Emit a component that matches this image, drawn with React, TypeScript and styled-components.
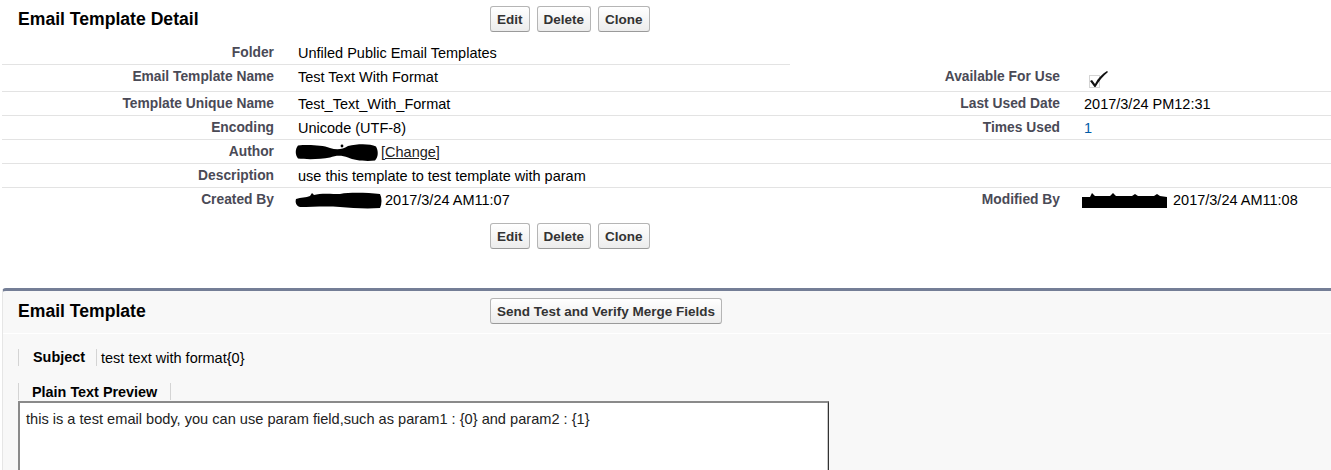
import React from "react";
import styled, { createGlobalStyle } from "styled-components";

const GlobalStyle = createGlobalStyle`
    html, body {
        margin: 0;
        padding: 0;
        background: #ffffff;
        font-family: "Liberation Sans", Arial, sans-serif;
        color: #000;
    }
    #root {
        width: 1331px;
        height: 470px;
        overflow: hidden;
    }
`;

const Page = styled.div`
    width: 1331px;
    height: 470px;
    overflow: hidden;
`;

const HeaderBar = styled.div<{ $pad: number; $height: number; $top?: number }>`
    display: grid;
    grid-template-columns: 472px 1fr;
    align-items: start;
    box-sizing: border-box;
    padding: ${({ $top = 0 }) => $top}px 0 0 ${({ $pad }) => $pad}px;
    height: ${({ $height }) => $height}px;
`;

const Title = styled.h2`
    margin: 0;
    font-size: 17.6px;
    line-height: 26px;
    font-weight: bold;
    color: #000;
`;

const ButtonRow = styled.div`
    display: flex;
    gap: 7px;
`;

const Btn = styled.button`
    height: 26px;
    padding: 0 6px;
    border: 1px solid #b5b5b5;
    border-bottom-color: #9a9a9a;
    border-radius: 3px;
    background: linear-gradient(#ffffff, #ececec);
    font-family: "Liberation Sans", Arial, sans-serif;
    font-size: 13.5px;
    font-weight: bold;
    color: #333;
    cursor: pointer;
`;

const DetailGrid = styled.div`
    display: grid;
    grid-template-columns: 284px 504px 282px 1fr;
    margin-left: 2px;
`;

const Label = styled.div<{ $line?: boolean }>`
    padding: 4px 12px 4px 0;
    text-align: right;
    font-size: 13.8px;
    line-height: 15px;
    font-weight: bold;
    color: #4a4a56;
    border-bottom: 1px solid ${({ $line = true }) => ($line ? "#e3e3e3" : "transparent")};
`;

const Value = styled.div<{ $line?: boolean }>`
    padding: 5px 0 3px 12px;
    font-size: 14.5px;
    line-height: 15px;
    color: #000;
    display: flex;
    align-items: flex-start;
    gap: 4px;
    border-bottom: 1px solid ${({ $line = true }) => ($line ? "#e3e3e3" : "transparent")};
`;

const CheckValue = styled(Value)`
    min-height: 18px;
`;

const NumberLink = styled.span`
    color: #015ba7;
`;

const ChangeLink = styled.a`
    color: #222;
    text-decoration: underline;
`;

const BottomBar = styled(HeaderBar)`
    margin-top: 11px;
`;

const Panel = styled.section`
    margin: 39px 0 0 2px;
    height: 200px;
    background: #f8f8f8;
    border-top: 3px solid #747e96;
    border-left: 1px solid #e6e6e6;
    border-top-left-radius: 4px;
`;

const PanelHeader = styled(HeaderBar)`
    border-bottom: 1px solid #ffffff;
`;

const PanelBody = styled.div`
    padding: 15px 0 0 15px;
`;

const SubjectRow = styled.div`
    display: flex;
    align-items: center;
    height: 17px;
    border-left: 1px solid #d4d4d4;
`;

const SubjectLabel = styled.span`
    width: 63px;
    padding-left: 14px;
    font-size: 14.4px;
    font-weight: bold;
    color: #000;
    border-right: 1px solid #d4d4d4;
    line-height: 17px;
`;

const SubjectValue = styled.span`
    padding-left: 4px;
    font-size: 14.5px;
    color: #000;
`;

const TabLabel = styled.div`
    margin-top: 17px;
    display: inline-block;
    height: 17px;
    padding: 0 13px 0 13px;
    border-left: 1px solid #d4d4d4;
    border-right: 1px solid #d4d4d4;
    font-size: 14.4px;
    font-weight: bold;
    line-height: 18px;
    color: #000;
`;

const PreviewBox = styled.div`
    width: 802px;
    height: 120px;
    padding: 8px 0 0 6px;
    background: #ffffff;
    border-top: 2px solid #8a8a8a;
    border-left: 2px solid #8a8a8a;
    border-right: 1px solid #333;
    box-shadow: inset -1px 0 #c8c8c8;
    font-size: 14.6px;
    color: #222;
`;

const Scribble = styled.svg`
    flex: none;
    margin: 0 0 0 -2px;
    overflow: visible;
`;

const Redacted: React.FC<{ d: string; w: number; dot?: [number, number] }> = ({ d, w, dot }) => (
    <Scribble width={w} height={15} viewBox={`0 0 ${w} 15`}>
        <path d={d} fill="#000" />
        {dot && <circle cx={dot[0]} cy={dot[1]} r={1.4} fill="#000" />}
    </Scribble>
);

const CheckMark = () => (
    <svg width={26} height={18} viewBox="0 0 26 18" style={{ marginLeft: 1 }}>
        <rect x={4.5} y={5.5} width={10} height={12} fill="none" stroke="#a8a8a8" strokeDasharray="1 1" />
        <path d="M5 11 L7 10 L10 14 C13 8 17 4 22 1 L23 2 C18 6 14 11 10.5 17 L9.5 17 Z" fill="#111" />
    </svg>
);

const authorBlob =
    "M2 0.5 C12 -0.5 26 0 34 3 C40 5 46 5 52 1 C62 -1.5 74 -1.5 80 1.5 C82.5 6 82.5 12 79 15.5 C70 16.5 58 15.5 52 12.5 C46 10 40 10 34 12.5 C24 14.5 10 14.5 2 13.5 C-1 10 -1 4 2 0.5 Z";
const createdBlob =
    "M0 6 C5 4 10 5 14 3 L16 0 L18 2 C24 0 36 1 44 1 C56 -1 72 0 84 1 C86 5 86 11 84 15 C70 16 56 15 44 14 C30 13 16 14 4 14 C0 13 -1 9 0 6 Z";
const modifiedBlob =
    "M0 4 L8 4 L10 0 L13 3 L28 3 L31 0 L34 3 L50 3 L53 1 L56 3 L72 3 L75 1 L78 3 L85 4 L85 15 L0 15 Z";

const Available = () => (
    <>
        <Label>Available For Use</Label>
        <CheckValue>
            <CheckMark />
        </CheckValue>
    </>
);

const Actions = () => (
    <ButtonRow>
        <Btn>Edit</Btn>
        <Btn>Delete</Btn>
        <Btn>Clone</Btn>
    </ButtonRow>
);

const App: React.FC = () => {
    return (
        <Page>
            <GlobalStyle />
            <HeaderBar $pad={18} $height={41} $top={6}>
                <Title>Email Template Detail</Title>
                <Actions />
            </HeaderBar>
            <DetailGrid>
                <Label>Folder</Label>
                <Value>Unfiled Public Email Templates</Value>
                <Label $line={false} />
                <Value $line={false} />

                <Label>Email Template Name</Label>
                <Value>Test Text With Format</Value>
                <Available />

                <Label>Template Unique Name</Label>
                <Value>Test_Text_With_Format</Value>
                <Label>Last Used Date</Label>
                <Value>2017/3/24 PM12:31</Value>

                <Label>Encoding</Label>
                <Value>Unicode (UTF-8)</Value>
                <Label>Times Used</Label>
                <Value>
                    <NumberLink>1</NumberLink>
                </Value>

                <Label>Author</Label>
                <Value>
                    <Redacted w={81} d={authorBlob} dot={[46, 1]} />
                    <ChangeLink href="#">[Change]</ChangeLink>
                </Value>
                <Label />
                <Value />

                <Label>Description</Label>
                <Value>use this template to test template with param</Value>
                <Label />
                <Value />

                <Label $line={false}>Created By</Label>
                <Value $line={false}>
                    <Redacted w={85} d={createdBlob} />
                    <span>2017/3/24 AM11:07</span>
                </Value>
                <Label $line={false}>Modified By</Label>
                <Value $line={false}>
                    <Redacted w={87} d={modifiedBlob} />
                    <span>2017/3/24 AM11:08</span>
                </Value>
            </DetailGrid>
            <BottomBar $pad={18} $height={26}>
                <span />
                <Actions />
            </BottomBar>

            <Panel>
                <PanelHeader $pad={15} $height={43} $top={7}>
                    <Title>Email Template</Title>
                    <ButtonRow>
                        <Btn>Send Test and Verify Merge Fields</Btn>
                    </ButtonRow>
                </PanelHeader>
                <PanelBody>
                    <SubjectRow>
                        <SubjectLabel>Subject</SubjectLabel>
                        <SubjectValue>test text with format{"{0}"}</SubjectValue>
                    </SubjectRow>
                    <TabLabel>Plain Text Preview</TabLabel>
                    <PreviewBox>
                        this is a test email body, you can use param field,such as param1 : {"{0}"} and param2 : {"{1}"}
                    </PreviewBox>
                </PanelBody>
            </Panel>
        </Page>
    );
};

export default App;
